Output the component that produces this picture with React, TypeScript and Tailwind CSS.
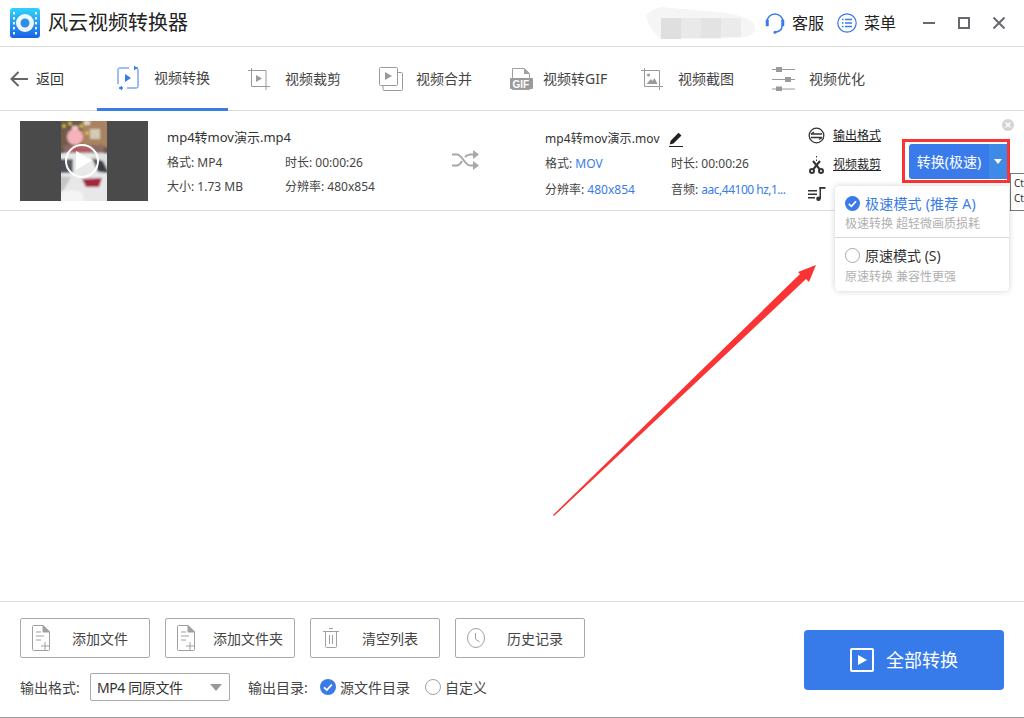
import * as React from 'react';

const Logo = () => (
  <svg width="30" height="30" viewBox="0 0 30 30">
    <defs>
      <linearGradient id="logoGrad" x1="0" y1="0" x2="0" y2="1">
        <stop offset="0" stopColor="#2fd3fb" />
        <stop offset="1" stopColor="#1a62e8" />
      </linearGradient>
    </defs>
    <rect width="30" height="30" rx="3" fill="url(#logoGrad)" />
    {[4, 9, 14, 19, 24].map((y) => (
      <g key={y} fill="#fff">
        <rect x="3" y={y} width="2" height="2.4" />
        <rect x="25" y={y} width="2" height="2.4" />
      </g>
    ))}
    <circle cx="15" cy="15" r="9" fill="#fff" fillOpacity="0.92" />
    <circle cx="15" cy="15" r="4.5" fill="#2a8fe8" />
  </svg>
);

const TabConvert = () => (
  <svg width="22" height="26" viewBox="0 0 22 26" fill="none" stroke="#3a7be8" strokeWidth="1">
    <path d="M12 3H2.500a1.500 1.500 0 0 0-1.500 1.500V19" />
    <path d="M10 23h9.500a1.500 1.500 0 0 0 1.500-1.500V4" />
    <path d="M17 3h4M2 23h4" strokeWidth="1.400" />
    <path d="M17 0.500v5l3-2.500zM5 20.500v5l-3-2.500z" fill="#3a7be8" stroke="none" />
    <path d="M8 9v8l6-4z" fill="#3a7be8" stroke="none" />
  </svg>
);

const TabCrop = () => (
  <svg width="22" height="22" viewBox="0 0 22 22" fill="none" stroke="#9a9a9a" strokeWidth="1">
    <path d="M0 2.500h4M3.500 0v2.500M3.500 2.500h14.500v16H3.500z" />
    <path d="M18 18.500h4M18 18.500v3.500" />
    <path d="M8 7v7l6-3.500z" fill="#9a9a9a" stroke="none" />
  </svg>
);

const TabMerge = () => (
  <svg width="24" height="24" viewBox="0 0 24 24" fill="none" stroke="#9a9a9a" strokeWidth="1">
    <rect x="0.500" y="0.500" width="18" height="18" rx="1" />
    <path d="M4 19v3.500a1 1 0 0 0 1 1h17.500a1 1 0 0 0 1-1V6.500a1 1 0 0 0-1-1H19" />
    <path d="M6 5v8l7-4z" fill="#9a9a9a" stroke="none" />
  </svg>
);

const TabGif = () => (
  <svg width="24" height="24" viewBox="0 0 24 24" fill="none">
    <path d="M2.500 12V1.500h12l5 5V12M2.500 22v.5h17V22" stroke="#a0a0a0" strokeWidth="1" />
    <path d="M14 1.500v5.500h5.500z" fill="#a0a0a0" />
    <rect x="0" y="11" width="23" height="11" rx="1" fill="#9a9a9a" />
    <text x="2.500" y="20.500" fontSize="10" fontWeight="700" fill="#fff" fontFamily="Liberation Sans, sans-serif">GIF</text>
  </svg>
);

const TabShot = () => (
  <svg width="22" height="22" viewBox="0 0 22 22" fill="none" stroke="#9a9a9a" strokeWidth="1">
    <path d="M0 2.500h4M3.500 0v2.500M3.500 2.500h15v16h-15z" />
    <path d="M18.500 18.500h3.500M18.500 18.500v3.500" />
    <circle cx="7.500" cy="7" r="1.500" fill="#9a9a9a" stroke="none" />
    <path d="M5.500 16l4.500-5 1.500 2 2-3 3 6z" fill="#9a9a9a" stroke="none" />
  </svg>
);

const TabTune = () => (
  <svg width="23" height="24" viewBox="0 0 23 24" fill="none">
    <path d="M0 2.500h23M0 12.500h23M0 22h23" stroke="#9a9a9a" strokeWidth="1" />
    <rect x="4" y="0" width="6" height="5" fill="#9a9a9a" />
    <rect x="13" y="10" width="6" height="5" fill="#9a9a9a" />
    <rect x="4" y="19.500" width="6" height="5" fill="#9a9a9a" />
  </svg>
);

const tabs = [
  { label: '视频转换', icon: <TabConvert />, gap: 'gap-[15px]' },
  { label: '视频裁剪', icon: <TabCrop />, gap: 'gap-[15px]' },
  { label: '视频合并', icon: <TabMerge />, gap: 'gap-[13px]' },
  { label: '视频转GIF', icon: <TabGif />, gap: 'gap-[9px]' },
  { label: '视频截图', icon: <TabShot />, gap: 'gap-[15px]' },
  { label: '视频优化', icon: <TabTune />, gap: 'gap-[14px]' },
];

const Thumbnail = () => (
  <svg width="128" height="80" viewBox="0 0 128 80" className="shrink-0">
    <defs>
      <filter id="thumbBlur" x="-10%" y="-10%" width="120%" height="120%">
        <feGaussianBlur stdDeviation="1.1" />
      </filter>
      <clipPath id="thumbClip">
        <rect x="41" y="0" width="46" height="80" />
      </clipPath>
    </defs>
    <rect width="128" height="80" fill="#4a4a4a" />
    <g clipPath="url(#thumbClip)">
      <g filter="url(#thumbBlur)">
        <rect x="38" y="-3" width="52" height="33" fill="#6f5a48" />
        <rect x="62" y="-3" width="28" height="29" fill="#a9825f" />
        <rect x="70" y="8" width="10" height="10" fill="#d4cab6" />
        <rect x="64" y="0" width="6" height="4" fill="#e3d8c6" />
        <rect x="44" y="24" width="40" height="8" fill="#8c6a66" />
        <rect x="50" y="27" width="22" height="3" fill="#c23b4c" />
        <circle cx="55" cy="16" r="8" fill="#f4b3b8" />
        <rect x="52" y="5" width="6" height="4" fill="#f4c6c4" />
        <g fill="#f0dc3a">
          <circle cx="44" cy="5" r="1.500" />
          <circle cx="50" cy="2.500" r="1.500" />
          <circle cx="61" cy="5" r="1.500" />
          <circle cx="67" cy="12" r="1.500" />
        </g>
        <rect x="38" y="32" width="52" height="50" fill="#e0e0e0" />
        <path d="M38 33h33l19 20v29H38z" fill="#e8e8e8" />
        <path d="M72 37l11 3 6 12-11-1z" fill="#3b3e44" />
        <path d="M38 38h15v14H38z" fill="#4c4f55" />
        <path d="M62 58l20-1-3 9H66z" fill="#a2283c" />
        <path d="M38 55l13 1-8 14-5 1z" fill="#c6c6c6" />
        <path d="M38 72q13-6 25 0v10H38z" fill="#f4f4f4" />
      </g>
    </g>
    <circle cx="62" cy="40" r="16" fill="#ffffff" fillOpacity="0.08" stroke="#fff" strokeWidth="2" />
    <path d="M56 30v19l16-9.500z" fill="#fff" />
  </svg>
);

const Shuffle = () => (
  <svg width="27" height="20" viewBox="0 0 27 20" fill="none" stroke="#a8a8a8" strokeWidth="2">
    <path d="M0 4.500h5c5 0 8 11 13 11h4" />
    <path d="M0 15.500h5c2 0 3.500-2 5-4.500M13 7c1.500-1.500 3-2.500 5-2.500h4" />
    <path d="M21 0v9l6-4.500zM21 11v9l6-4.500z" fill="#a8a8a8" stroke="none" />
  </svg>
);

const Pencil = () => (
  <svg width="14" height="15" viewBox="0 0 14 15">
    <path d="M9.500 0.800l3 2.700-8 8-3.800 1 1-3.800z" fill="#222" />
    <path d="M0 14.500h14" stroke="#222" strokeWidth="1" />
  </svg>
);

const FormatIcon = () => (
  <svg width="17" height="17" viewBox="0 0 17 17" fill="none" stroke="#333" strokeWidth="1.300">
    <circle cx="8.500" cy="8.500" r="7.300" />
    <path d="M3 7h11M14 10.500H3" />
    <path d="M6 5l-3 2M11 12.500l3-2" />
  </svg>
);

const ScissorIcon = () => (
  <svg width="15" height="18" viewBox="0 0 15 18" fill="none" stroke="#333" strokeWidth="2">
    <path d="M7.500 0v1.500M7.500 3.500v1.500" strokeWidth="1" />
    <path d="M4 5l6.500 8M11 5l-6.500 8" />
    <circle cx="3" cy="15" r="2" />
    <circle cx="12" cy="15" r="2" />
  </svg>
);

const MusicIcon = () => (
  <svg width="18" height="14" viewBox="0 0 18 14" fill="#333">
    <rect x="0" y="3" width="9" height="1.500" />
    <rect x="0" y="6.500" width="9" height="1.500" />
    <rect x="0" y="10" width="7" height="1.500" />
    <rect x="11.500" y="0" width="1.500" height="12" />
    <rect x="11.500" y="0" width="6" height="1.800" />
    <circle cx="10.500" cy="11.700" r="2.300" />
  </svg>
);

const CheckDot = ({ size = 16 }: { size?: number }) => (
  <svg width={size} height={size} viewBox="0 0 16 16" className="shrink-0">
    <circle cx="8" cy="8" r="8" fill="#3a7be8" />
    <path d="M4 8.300l2.800 2.700 5-5.400" fill="none" stroke="#fff" strokeWidth="1.800" />
  </svg>
);

const EmptyDot = ({ size = 16 }: { size?: number }) => (
  <svg width={size} height={size} viewBox="0 0 16 16" className="shrink-0">
    <circle cx="8" cy="8" r="7.500" fill="#fff" stroke="#a3a3a3" />
  </svg>
);

const AddFileIcon = () => (
  <svg width="18" height="26" viewBox="0 0 18 26" fill="none" stroke="#a0a0a0" strokeWidth="1">
    <path d="M11 .5H1.500a1 1 0 0 0-1 1v23a1 1 0 0 0 1 1H16.500a1 1 0 0 0 1-1V7z" />
    <path d="M11 .5l6.500 6.500H11z" fill="#a0a0a0" />
    <path d="M4 7h5M4 11h8M4 15h5" />
    <path d="M9 21h8M13 17v8" />
  </svg>
);

const TrashIcon = () => (
  <svg width="16" height="20" viewBox="0 0 16 20" fill="none" stroke="#a0a0a0" strokeWidth="1">
    <path d="M0 3.500h16M6 .5h4" />
    <path d="M2.500 3.500v15a1 1 0 0 0 1 1h9a1 1 0 0 0 1-1v-15" />
    <path d="M6.500 7v9M9.500 7v9" />
  </svg>
);

const ClockIcon = () => (
  <svg width="18" height="20" viewBox="0 0 18 20" fill="none" stroke="#a0a0a0" strokeWidth="1">
    <ellipse cx="9" cy="10" rx="8.500" ry="9.500" />
    <path d="M8.500 5v6l4 3" />
  </svg>
);

const bottomButtons = [
  { label: '添加文件', icon: <AddFileIcon />, textClass: 'ml-[22px]' },
  { label: '添加文件夹', icon: <AddFileIcon />, textClass: 'ml-[18px]' },
  { label: '清空列表', icon: <TrashIcon />, textClass: 'ml-[22px]' },
  { label: '历史记录', icon: <ClockIcon />, textClass: 'ml-[22px]' },
];

export default function App() {
  return (
    <div className="relative flex h-[718px] w-[1024px] flex-col overflow-hidden bg-white font-['Noto_Sans','Noto_Sans_CJK_SC',sans-serif] text-[#333]">
      {/* Title bar */}
      <div className="flex h-[47px] shrink-0 items-center border-b border-[#dcdcdc] pl-[10px]">
        <Logo />
        <span className="ml-[8px] text-[20px] text-[#222]">风云视频转换器</span>
        <svg width="110" height="32" viewBox="0 0 110 32" className="ml-auto">
          <path d="M0 8Q6 2 15 0L60 4Q100 6 109 18Q110 28 100 30L70 32 15 32 Q2 22 0 8z" fill="#f5f5f5" />
          <rect x="15" y="11" width="20" height="21" fill="#dfdfdf" />
          <rect x="35" y="11" width="20" height="20" fill="#e9e9e9" />
          <rect x="55" y="11" width="20" height="20" fill="#e3e3e3" />
          <rect x="75" y="11" width="20" height="19" fill="#ebebeb" />
        </svg>
        <div className="ml-[9px] flex items-center gap-[7px]">
          <svg width="20" height="22" viewBox="0 0 20 22" fill="none" stroke="#3a7be8" strokeWidth="1.500">
            <path d="M2 11V10a8 8 0 0 1 16 0v1" />
            <path d="M1 8h2.500v6H1zM16.500 8H19v6h-2.500z" fill="#3a7be8" strokeWidth="0.500" />
            <path d="M17 14q0 5-6 6" />
            <circle cx="10" cy="20.300" r="1.500" fill="#3a7be8" stroke="none" />
          </svg>
          <span className="text-[16px] text-[#222]">客服</span>
        </div>
        <div className="ml-[13px] flex items-center gap-[7px]">
          <svg width="20" height="20" viewBox="0 0 20 20" fill="none" stroke="#3a7be8" strokeWidth="1.200">
            <circle cx="10" cy="10" r="9.200" />
            <path d="M8 6.500h7M8 10h7M8 13.500h7M5 6.500h1.500M5 10h1.500M5 13.500h1.500" strokeWidth="1.500" />
          </svg>
          <span className="text-[16px] text-[#222]">菜单</span>
        </div>
        <div className="ml-[27px] flex items-center gap-[23px] pr-[19px]">
          <svg width="12" height="12" viewBox="0 0 12 12"><path d="M0 6h12" stroke="#6b6670" strokeWidth="2" /></svg>
          <svg width="12" height="12" viewBox="0 0 12 12"><rect x="1" y="1" width="10" height="10" fill="none" stroke="#6b6670" strokeWidth="2" /></svg>
          <svg width="12" height="12" viewBox="0 0 12 12"><path d="M0.500 0.500l11 11M11.500 0.500l-11 11" stroke="#6b6670" strokeWidth="2" /></svg>
        </div>
      </div>

      {/* Tabs */}
      <div className="flex h-[64px] shrink-0 border-b border-[#dcdcdc]">
        <div className="flex w-[97px] shrink-0 items-center pl-[10px]">
          <svg width="18" height="16" viewBox="0 0 18 16" fill="none" stroke="#666" strokeWidth="2">
            <path d="M18 8H2M8.500 1L1.500 8l7 7" />
          </svg>
          <span className="ml-[8px] text-[14px]">返回</span>
        </div>
        {tabs.map((tab, i) => (
          <div
            key={tab.label}
            className={
              i === 0
                ? 'flex h-[64px] w-[131px] shrink-0 items-center gap-[15px] border-b-[3px] border-[#3a7be8] pl-[20px]'
                : `flex h-[63px] w-[131px] shrink-0 items-center pl-[20px] ${tab.gap}`
            }
          >
            {tab.icon}
            <span className="text-[14px] text-[#444]">{tab.label}</span>
          </div>
        ))}
      </div>

      {/* File row */}
      <div className="flex h-[100px] shrink-0 border-b border-[#dcdcdc] pl-[20px] pt-[10px]">
        <Thumbnail />
        <div className="ml-[19px] w-[285px] shrink-0 pt-[6px] text-[12px] text-[#444]">
          <div className="h-[20px] text-[13px] leading-[20px] text-[#333]">mp4转mov演示.mp4</div>
          <div className="mt-[6px] grid grid-cols-[118px_1fr] gap-y-[4px] leading-[20px]">
            <span>格式: MP4</span>
            <span>时长: 00:00:26</span>
            <span>大小: 1.73 MB</span>
            <span>分辨率: 480x854</span>
          </div>
        </div>
        <div className="shrink-0 pt-[29px]">
          <Shuffle />
        </div>
        <div className="ml-[66px] w-[263px] shrink-0 pt-[8px] text-[12px] text-[#444]">
          <div className="flex h-[20px] items-center text-[12px] tracking-[0.1px] text-[#333]">
            mp4转mov演示.mov
            <span className="ml-[9px]"><Pencil /></span>
          </div>
          <div className="mt-[5px] grid grid-cols-[126px_1fr] gap-y-[6px] leading-[20px]">
            <span>格式: <span className="text-[#3a7be8]">MOV</span></span>
            <span>时长: 00:00:26</span>
            <span>分辨率: <span className="text-[#3a7be8]">480x854</span></span>
            <span className="whitespace-nowrap">音频: <span className="tracking-[-0.5px] text-[#3a7be8]">aac,44100 hz,1...</span></span>
          </div>
        </div>
        <div className="flex shrink-0 flex-col text-[12px]">
          <div className="flex h-[29px] items-center gap-[8px]">
            <FormatIcon />
            <span className="text-[#222] underline">输出格式</span>
          </div>
          <div className="flex h-[29px] items-center gap-[9px] pl-[1px]">
            <ScissorIcon />
            <span className="text-[#222] underline">视频裁剪</span>
          </div>
          <div className="flex h-[29px] items-center">
            <MusicIcon />
          </div>
        </div>
      </div>

      {/* Empty list area */}
      <div className="flex-1" />

      {/* Bottom bar */}
      <div className="flex h-[117px] shrink-0 justify-between border-y border-t-[#dcdcdc] border-b-[#999] px-[20px]">
        <div className="pt-[16px]">
          <div className="flex gap-[15px]">
            {bottomButtons.map((b) => (
              <div key={b.label} className="flex h-[40px] w-[130px] items-center rounded-[2px] border border-[#aaa] pl-[11px]">
                <span className="flex w-[18px] justify-center">{b.icon}</span>
                <span className={`text-[14px] text-[#444] ${b.textClass}`}>{b.label}</span>
              </div>
            ))}
          </div>
          <div className="mt-[15px] flex h-[28px] items-center text-[14px] text-[#444]">
            <span className="w-[70px]">输出格式:</span>
            <div className="flex h-[28px] w-[140px] items-center justify-between rounded-[2px] border border-[#aaa] pl-[6px] pr-[7px]">
              <span className="tracking-[-0.4px] text-[#333]">MP4 同原文件</span>
              <span className="h-0 w-0 border-x-[6px] border-t-[7px] border-x-transparent border-t-[#999]" />
            </div>
            <span className="ml-[18px] w-[72px]">输出目录:</span>
            <CheckDot />
            <span className="ml-[4px] w-[70px]">源文件目录</span>
            <span className="ml-[15px]"><EmptyDot /></span>
            <span className="ml-[4px]">自定义</span>
          </div>
        </div>
        <div className="pt-[28px]">
          <button className="flex h-[60px] w-[200px] items-center justify-center gap-[12px] rounded-[4px] bg-[#377bea] text-[18px] text-white">
            <svg width="24" height="24" viewBox="0 0 24 24" fill="none">
              <rect x="1" y="1" width="22" height="22" rx="1" stroke="#fff" strokeWidth="2" />
              <path d="M8 7v10l9-5z" fill="#fff" />
            </svg>
            全部转换
          </button>
        </div>
      </div>

      {/* Row close */}
      <svg width="12" height="12" viewBox="0 0 12 12" className="absolute left-[1002px] top-[119px]">
        <circle cx="6" cy="6" r="6" fill="#d4d4d4" />
        <path d="M3.500 3.500l5 5M8.500 3.500l-5 5" stroke="#fff" strokeWidth="1.200" />
      </svg>

      {/* Tooltip clipped by the window edge */}
      <div className="absolute left-[1010px] top-[173px] h-[38px] w-[14px] border-y border-l border-y-[#777] border-l-[#777] bg-white pl-[3px] pt-[2px] text-[10px] leading-[15px] text-[#333]">
        <div>Ct</div>
        <div>Ct</div>
      </div>

      {/* Convert button with red highlight, sits over the file row */}
      <div className="absolute left-[902px] top-[139px] flex h-[44px] w-[108px] items-center border-[3px] border-[#fa3434] pl-[4px]">
        <span className="flex h-[35px] w-[80px] items-center justify-center rounded-l-[3px] bg-[#3a7bec] text-[14px] text-white">转换(极速)</span>
        <span className="flex h-[35px] w-[18px] items-center justify-center bg-[#3f8ae6]">
          <span className="h-0 w-0 border-x-[4px] border-t-[5px] border-x-transparent border-t-white" />
        </span>
      </div>

      {/* Speed mode menu */}
      <div className="absolute left-[835px] top-[186px] w-[174px] rounded-[4px] bg-white shadow-[0_0_6px_rgba(0,0,0,0.18)]">
        <div className="h-[52px] border-b border-[#d8d8d8] pl-[10px] pt-[7px]">
          <div className="flex h-[20px] items-center gap-[5px] text-[14px] tracking-[0.2px] text-[#3a7be8]">
            <CheckDot size={15} />
            极速模式 (推荐 A)
          </div>
          <div className="mt-[2px] text-[12px] text-[#b0b0b0]">极速转换 超轻微画质损耗</div>
        </div>
        <div className="h-[53px] pl-[10px] pt-[7px]">
          <div className="flex h-[20px] items-center gap-[5px] text-[14px] text-[#333]">
            <EmptyDot size={15} />
            原速模式 (S)
          </div>
          <div className="mt-[3px] text-[12px] text-[#b0b0b0]">原速转换 兼容性更强</div>
        </div>
      </div>

      {/* Annotation arrow */}
      <svg width="1024" height="718" viewBox="0 0 1024 718" className="pointer-events-none absolute left-0 top-0">
        <path d="M553 515L800 274 798 272 816 265 809 282 806 279 554 516z" fill="#fa3434" />
      </svg>
    </div>
  );
}
